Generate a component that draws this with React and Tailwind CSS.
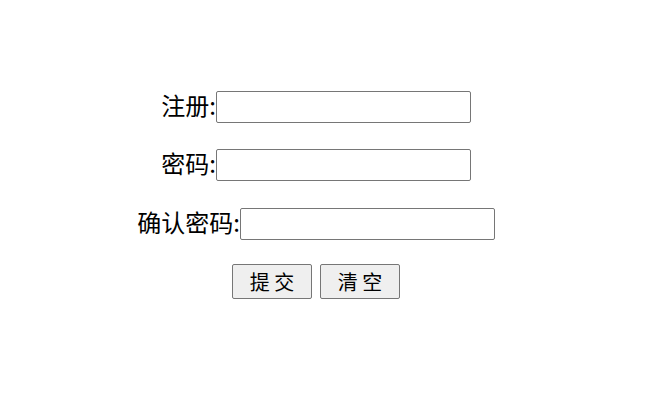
export default function App() {
  return (
    <div className="h-[415px] w-[656px] bg-white font-['Noto_Sans_CJK_SC','Noto_Sans',sans-serif] text-black">
      <form className="flex w-[632px] flex-col items-center pt-[91px]">
        <div className="flex h-[32px] items-center">
          <label className="mb-[4px] text-[24px] leading-none">注册:</label>
          <input type="text" className="h-[32px] w-[255px] rounded-[2px] border border-[#767676] bg-white" />
        </div>
        <div className="mt-[26px] flex h-[32px] items-center">
          <label className="mb-[4px] text-[24px] leading-none">密码:</label>
          <input type="password" className="h-[32px] w-[255px] rounded-[2px] border border-[#767676] bg-white" />
        </div>
        <div className="mt-[27px] flex h-[32px] items-center">
          <label className="mb-[4px] text-[24px] leading-none">确认密码:</label>
          <input type="password" className="h-[32px] w-[255px] rounded-[2px] border border-[#767676] bg-white" />
        </div>
        <div className="mt-[24px] flex gap-[8px]">
          <button type="submit" className="h-[35px] w-[80px] rounded-[2px] border border-[#767676] bg-[#efefef] text-[20px] leading-none">
            提 交
          </button>
          <button type="reset" className="h-[35px] w-[80px] rounded-[2px] border border-[#767676] bg-[#efefef] text-[20px] leading-none">
            清 空
          </button>
        </div>
      </form>
    </div>
  );
}
